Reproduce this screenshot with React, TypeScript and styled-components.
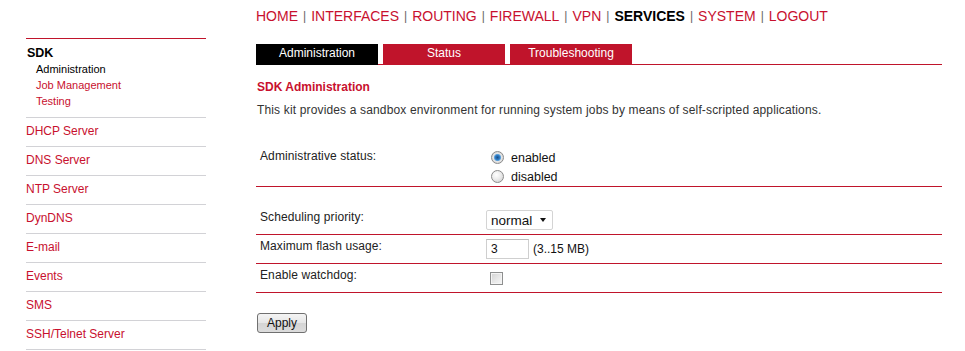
import React from "react";
import styled, { createGlobalStyle } from "styled-components";

const RED = "#c8102e";
const TAB_RED = "#c0142b";

const GlobalStyle = createGlobalStyle`
  html, body { margin: 0; padding: 0; background: #fff; }
  body { font-family: "Liberation Sans", Arial, sans-serif; font-size: 12px; color: #222; }
  * { box-sizing: border-box; }
`;

const Page = styled.div`
  display: flex;
  align-items: flex-start;
  width: 965px;
`;

const Sidebar = styled.nav`
  width: 180px;
  margin-left: 26px;
  padding-top: 38px;
`;

const SideSection = styled.div`
  border-top: 1px solid ${TAB_RED};
  border-bottom: 1px solid #d2d2d6;
  padding: 6px 0 8px 1px;
`;

const SideHeading = styled.div`
  font-weight: bold;
  font-size: 12.5px;
  line-height: 16px;
  color: #000;
`;

const SubLink = styled.a<{ $active?: boolean }>`
  display: block;
  padding-left: 9px;
  font-size: 11px;
  line-height: 16px;
  color: ${(p) => (p.$active ? "#000" : RED)};
  text-decoration: none;
`;

const SideItem = styled.a`
  display: block;
  padding: 5px 0 7px;
  line-height: 16px;
  font-size: 12px;
  color: ${RED};
  text-decoration: none;
  border-bottom: 1px solid #d2d2d6;
`;

const Main = styled.main`
  width: 686px;
  margin-left: 50px;
`;

const TopNav = styled.div`
  padding-top: 8px;
  height: 44px;
  font-size: 14px;
  line-height: 16px;
  white-space: nowrap;
`;

const NavLink = styled.a<{ $active?: boolean }>`
  color: ${(p) => (p.$active ? "#000" : RED)};
  font-weight: ${(p) => (p.$active ? "bold" : "normal")};
  text-decoration: none;
`;

const NavSep = styled.span`
  color: #666;
  font-size: 12px;
  margin: 0 5px;
  position: relative;
  top: -1px;
`;

const TabBar = styled.div`
  display: flex;
  gap: 5px;
  height: 21px;
  border-bottom: 1px solid ${TAB_RED};
`;

const Tab = styled.a<{ $active?: boolean }>`
  width: 122px;
  height: 21px;
  margin-bottom: -1px;
  padding-bottom: 2px;
  line-height: 18px;
  text-align: center;
  font-size: 12px;
  color: #fff;
  text-decoration: none;
  background: ${(p) => (p.$active ? "#000" : TAB_RED)};
`;

const Title = styled.h1`
  margin: 14px 0 0 1px;
  font-size: 12px;
  line-height: 16px;
  font-weight: bold;
  color: ${RED};
`;

const Description = styled.p`
  margin: 7px 0 0 1px;
  font-size: 12px;
  line-height: 16px;
  letter-spacing: 0.15px;
  color: #333;
`;

const Form = styled.form`
  margin-top: 30px;
`;

const Row = styled.div<{ $tall?: boolean }>`
  display: grid;
  grid-template-columns: 226px 1fr;
  padding-left: 4px;
  min-height: ${(p) => (p.$tall ? "39px" : "29px")};
  border-bottom: 1px solid ${TAB_RED};
`;

const Spacer = styled.div`
  height: 19px;
`;

const Label = styled.div<{ $tall?: boolean }>`
  padding-top: ${(p) => (p.$tall ? "0" : "3px")};
  line-height: 16px;
  font-size: 12px;
  letter-spacing: 0.1px;
  color: #222;
`;

const Value = styled.div<{ $tall?: boolean }>`
  display: flex;
  flex-direction: ${(p) => (p.$tall ? "column" : "row")};
  align-items: ${(p) => (p.$tall ? "stretch" : "center")};
  padding: ${(p) => (p.$tall ? "0" : "4px 0")};
  height: ${(p) => (p.$tall ? "auto" : "28px")};
`;

const RadioLine = styled.label`
  display: flex;
  align-items: center;
  height: 19px;
  font-size: 12.5px;
  color: #111;
`;

const Radio = styled.input.attrs({ type: "radio" })`
  appearance: none;
  width: 13px;
  height: 13px;
  margin: 0 7px 0 5px;
  border-radius: 50%;
  border: 1px solid #8b8b8b;
  background: radial-gradient(circle at 40% 35%, #ffffff 0%, #ececec 45%, #c9c9c9 100%);
  &:checked {
    background: radial-gradient(circle at 50% 50%, #1b4f86 0%, #2e7bc4 28%, #5fa2da 40%, #e6e6e6 52%, #c4c4c4 100%);
  }
`;

const SelectBox = styled.div`
  display: flex;
  align-items: center;
  width: 67px;
  height: 20px;
  padding-left: 4px;
  border: 1px solid #d4d4d4;
  border-radius: 2px;
  background: #fff;
  font-size: 13.5px;
  color: #111;
`;

const SelectText = styled.span`
  flex: 1;
`;

const Caret = styled.span`
  width: 0;
  height: 0;
  margin-right: 6px;
  border-left: 3.5px solid transparent;
  border-right: 3.5px solid transparent;
  border-top: 4px solid #111;
`;

const NumberInput = styled.input`
  width: 43px;
  height: 20px;
  padding: 0 4px;
  border: 1px solid #cfcfcf;
  border-top-color: #bdbdbd;
  font-family: "Liberation Sans", Arial, sans-serif;
  font-size: 12px;
  color: #111;
  outline: none;
`;

const Hint = styled.span`
  margin-left: 4px;
  font-size: 12px;
  color: #111;
`;

const Checkbox = styled.input.attrs({ type: "checkbox" })`
  appearance: none;
  width: 13px;
  height: 13px;
  margin: 1px 0 0 4px;
  border: 1px solid #8e8f8f;
  background: linear-gradient(135deg, #d2d2d2 0%, #e8e8e8 55%, #f7f7f7 100%);
  box-shadow: inset 0 0 0 1px #f4f4f4;
`;

const ApplyButton = styled.button`
  margin: 20px 0 0 1px;
  width: 50px;
  height: 20px;
  padding: 0;
  border: 1px solid #707070;
  border-radius: 3px;
  background: linear-gradient(#f4f4f4 0%, #e6e6e6 50%, #d4d4d4 51%, #dcdcdc 100%);
  font-family: "Liberation Sans", Arial, sans-serif;
  font-size: 12px;
  color: #111;
`;

const navItems = ["HOME", "INTERFACES", "ROUTING", "FIREWALL", "VPN", "SERVICES", "SYSTEM", "LOGOUT"];
const sideItems = ["DHCP Server", "DNS Server", "NTP Server", "DynDNS", "E-mail", "Events", "SMS", "SSH/Telnet Server"];

export default function App() {
  return (
    <>
      <GlobalStyle />
      <Page>
        <Sidebar>
          <SideSection>
            <SideHeading>SDK</SideHeading>
            <SubLink $active>Administration</SubLink>
            <SubLink>Job Management</SubLink>
            <SubLink>Testing</SubLink>
          </SideSection>
          {sideItems.map((s) => (
            <SideItem key={s}>{s}</SideItem>
          ))}
        </Sidebar>
        <Main>
          <TopNav>
            {navItems.map((n, i) => (
              <React.Fragment key={n}>
                {i > 0 && <NavSep>|</NavSep>}
                <NavLink $active={n === "SERVICES"}>{n}</NavLink>
              </React.Fragment>
            ))}
          </TopNav>
          <TabBar>
            <Tab $active>Administration</Tab>
            <Tab>Status</Tab>
            <Tab>Troubleshooting</Tab>
          </TabBar>
          <Title>SDK Administration</Title>
          <Description>
            This kit provides a sandbox environment for running system jobs by means of self-scripted applications.
          </Description>
          <Form onSubmit={(e) => e.preventDefault()}>
            <Row $tall>
              <Label $tall>Administrative status:</Label>
              <Value $tall>
                <RadioLine>
                  <Radio name="status" defaultChecked />
                  enabled
                </RadioLine>
                <RadioLine>
                  <Radio name="status" />
                  disabled
                </RadioLine>
              </Value>
            </Row>
            <Spacer />
            <Row>
              <Label>Scheduling priority:</Label>
              <Value>
                <SelectBox>
                  <SelectText>normal</SelectText>
                  <Caret />
                </SelectBox>
              </Value>
            </Row>
            <Row>
              <Label>Maximum flash usage:</Label>
              <Value>
                <NumberInput defaultValue="3" />
                <Hint>(3..15 MB)</Hint>
              </Value>
            </Row>
            <Row>
              <Label>Enable watchdog:</Label>
              <Value>
                <Checkbox />
              </Value>
            </Row>
            <ApplyButton type="submit">Apply</ApplyButton>
          </Form>
        </Main>
      </Page>
    </>
  );
}
